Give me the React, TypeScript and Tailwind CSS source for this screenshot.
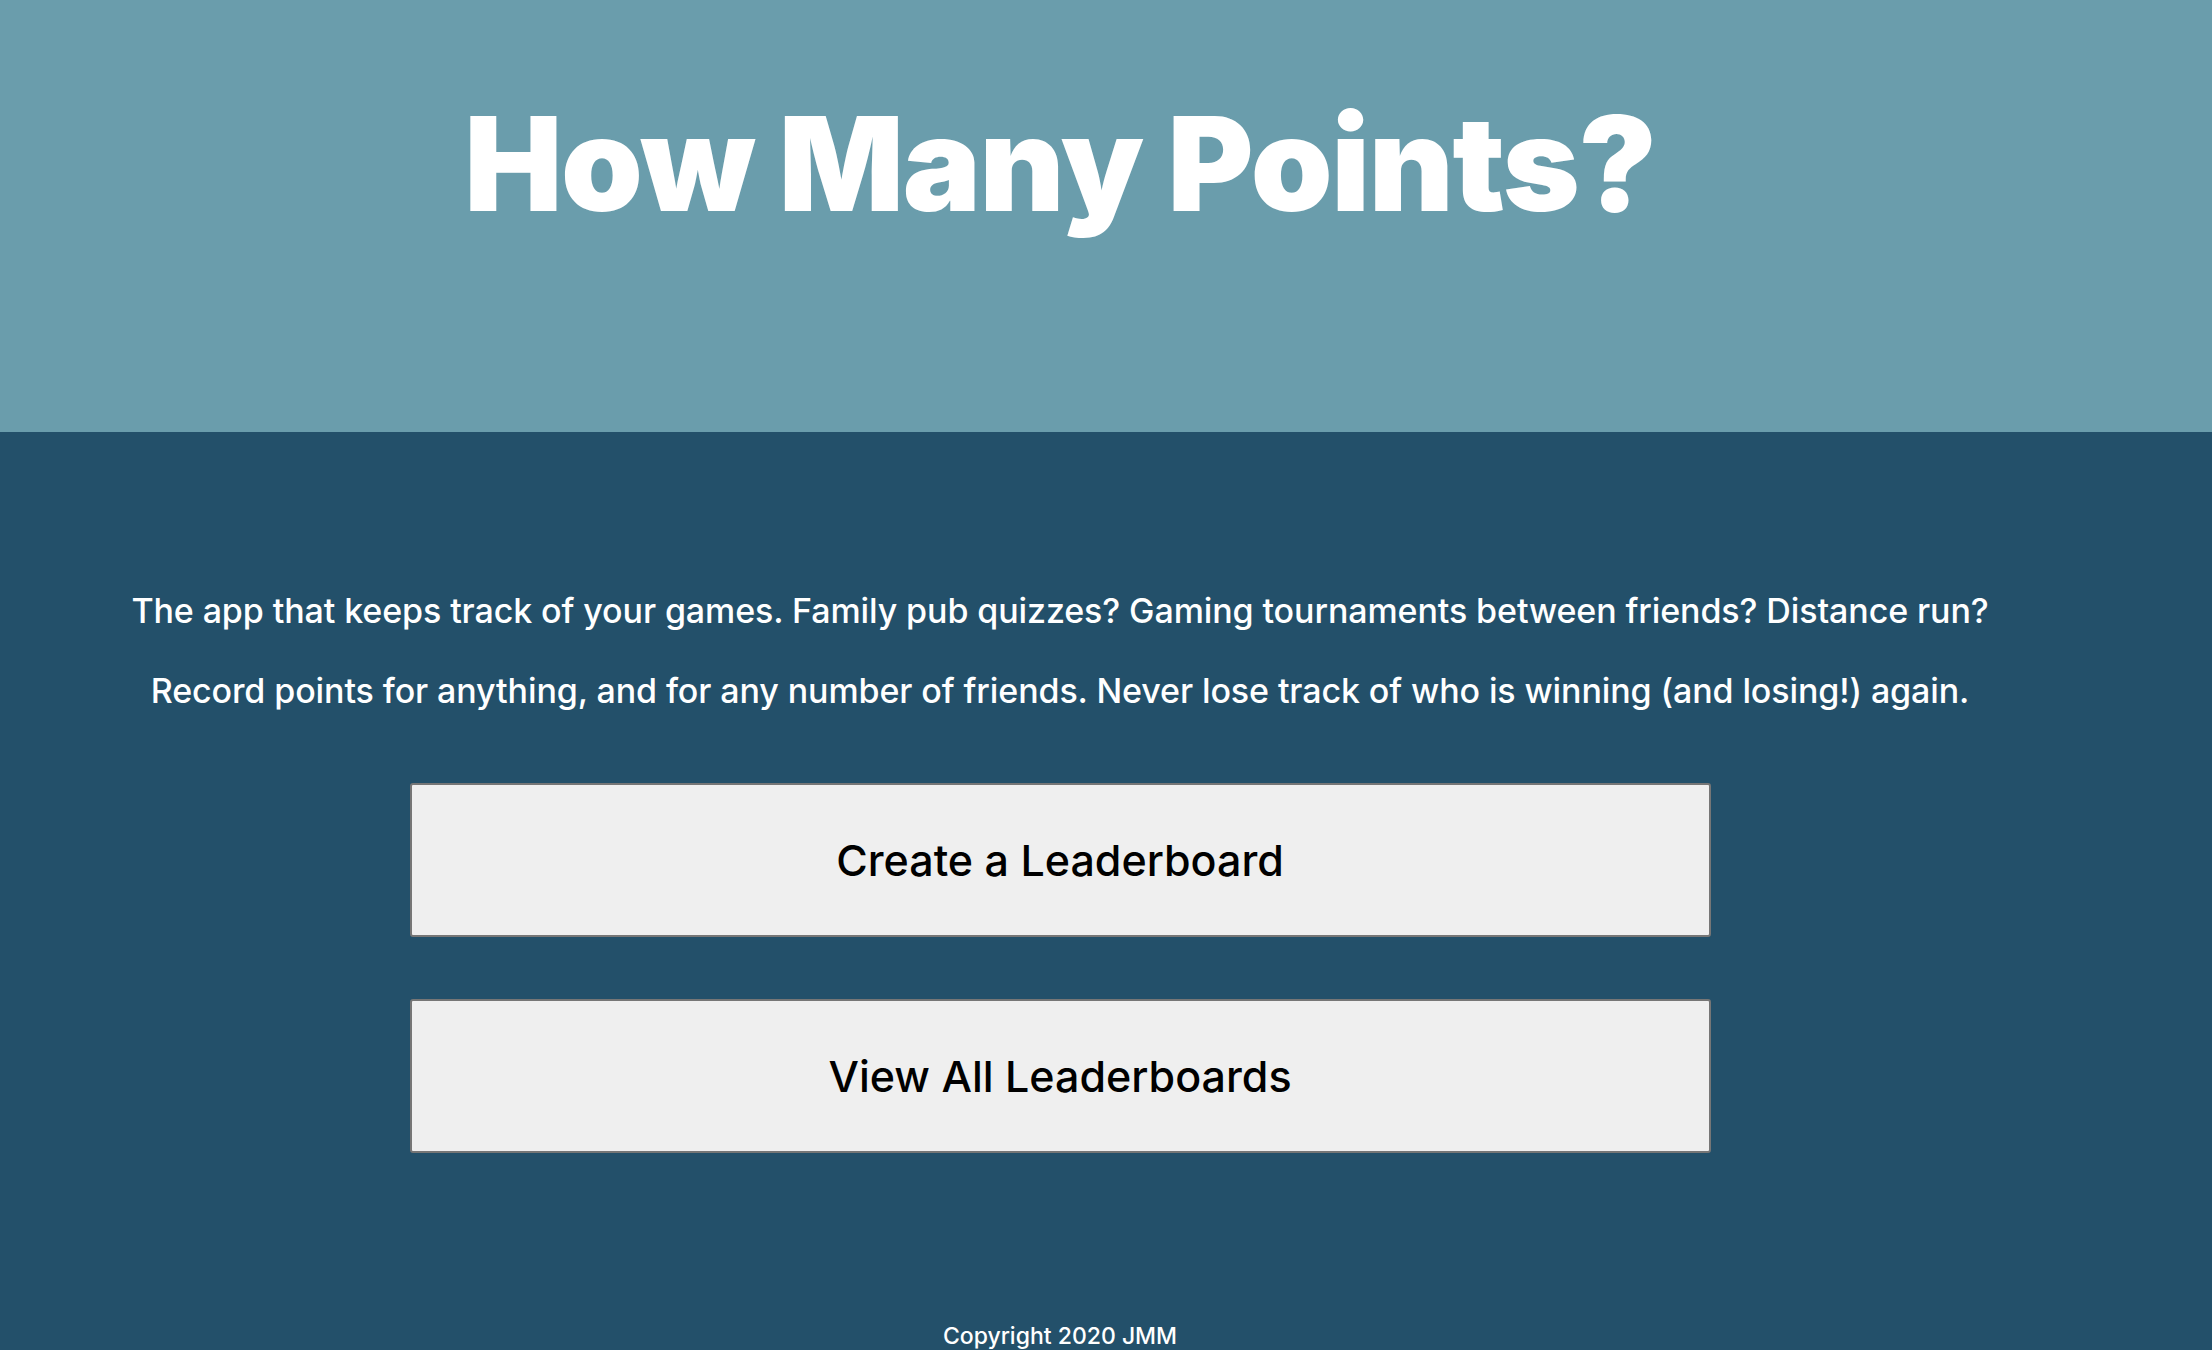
import React from "react";

export default function App() {
  const font = { fontFamily: "Inter, 'Noto Sans', sans-serif" } as React.CSSProperties;
  return (
    <div style={font} className="w-full min-h-[1350px] bg-[#23506a] text-white">
      <header className="h-[432px] bg-[#6a9dac] pt-[98px] pr-[92px]">
        <h1 className="text-center text-[131px] leading-none font-black tracking-[-0.01em]">
          How Many Points?
        </h1>
      </header>
      <main className="pr-[92px] pt-[159px] pb-[20px] flex flex-col items-center">
        <p className="text-[34px] leading-[40px] font-medium text-center tracking-[-0.003em]">
          The app that keeps track of your games. Family pub quizzes? Gaming tournaments between friends? Distance run?
        </p>
        <p className="mt-[40px] text-[34px] leading-[40px] font-medium text-center tracking-[-0.003em]">
          Record points for anything, and for any number of friends. Never lose track of who is winning (and losing!) again.
        </p>
        <button className="mt-[72px] w-[1301px] h-[154px] bg-[#efefef] border-2 border-[#767676] rounded-[3px] flex items-center justify-center text-black text-[43px] font-medium">
          Create a Leaderboard
        </button>
        <button className="mt-[62px] w-[1301px] h-[154px] bg-[#efefef] border-2 border-[#767676] rounded-[3px] flex items-center justify-center text-black text-[43px] font-medium">
          View All Leaderboards
        </button>
        <footer className="mt-[169px] text-[23px] leading-[28px] font-medium">
          Copyright 2020 JMM
        </footer>
      </main>
    </div>
  );
}
